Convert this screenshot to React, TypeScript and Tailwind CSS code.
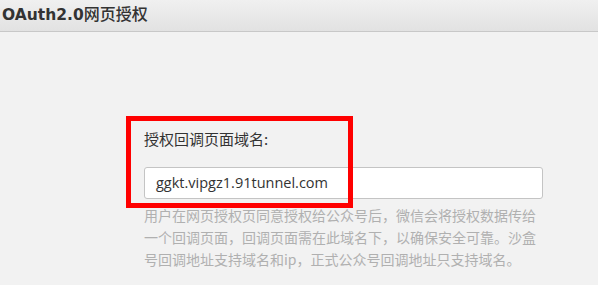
export default function App() {
  return (
    <div className="w-[598px] h-[285px] bg-[#f2f2f2] overflow-hidden relative">
      <div className="h-[32px] border-b border-[#c8c8c8] bg-gradient-to-b from-[#f0f0f0] to-[#e2e2e2] flex items-center pl-[2px]">
        <span className="text-[#333] leading-none -mt-[2px] flex items-baseline">
          <span className="text-[15.5px] font-bold" style={{ fontFamily: '"DejaVu Sans", sans-serif' }}>OAuth2.0</span>
          <span className="text-[16px] font-medium" style={{ fontFamily: '"Noto Sans CJK SC", sans-serif' }}>网页授权</span>
        </span>
      </div>
      <div className="ml-[144px] w-[400px] pt-[97px] flex flex-col" style={{ fontFamily: '"Noto Sans CJK SC", sans-serif' }}>
        <label className="text-[15px] leading-[20px] text-[#333]">授权回调页面域名:</label>
        <div className="mt-[18px] h-[32px] w-[399px] bg-white border border-[#c4c4c4] rounded-[3px] flex items-center pl-[11px] text-[14.5px] text-[#333]" style={{ fontFamily: '"Open Sans", "Noto Sans CJK SC", sans-serif' }}>
          ggkt.vipgz1.91tunnel.com
        </div>
        <p className="mt-[5px] text-[14px] leading-[22px] text-[#b0b0b0] w-[396px]">
          用户在网页授权页同意授权给公众号后，微信会将授权数据传给一个回调页面，回调页面需在此域名下，以确保安全可靠。沙盒号回调地址支持域名和ip，正式公众号回调地址只支持域名。
        </p>
      </div>
      <div className="absolute left-[126px] top-[116px] w-[227px] h-[92px] border-[5px] border-[#ff0000]" />
    </div>
  );
}
